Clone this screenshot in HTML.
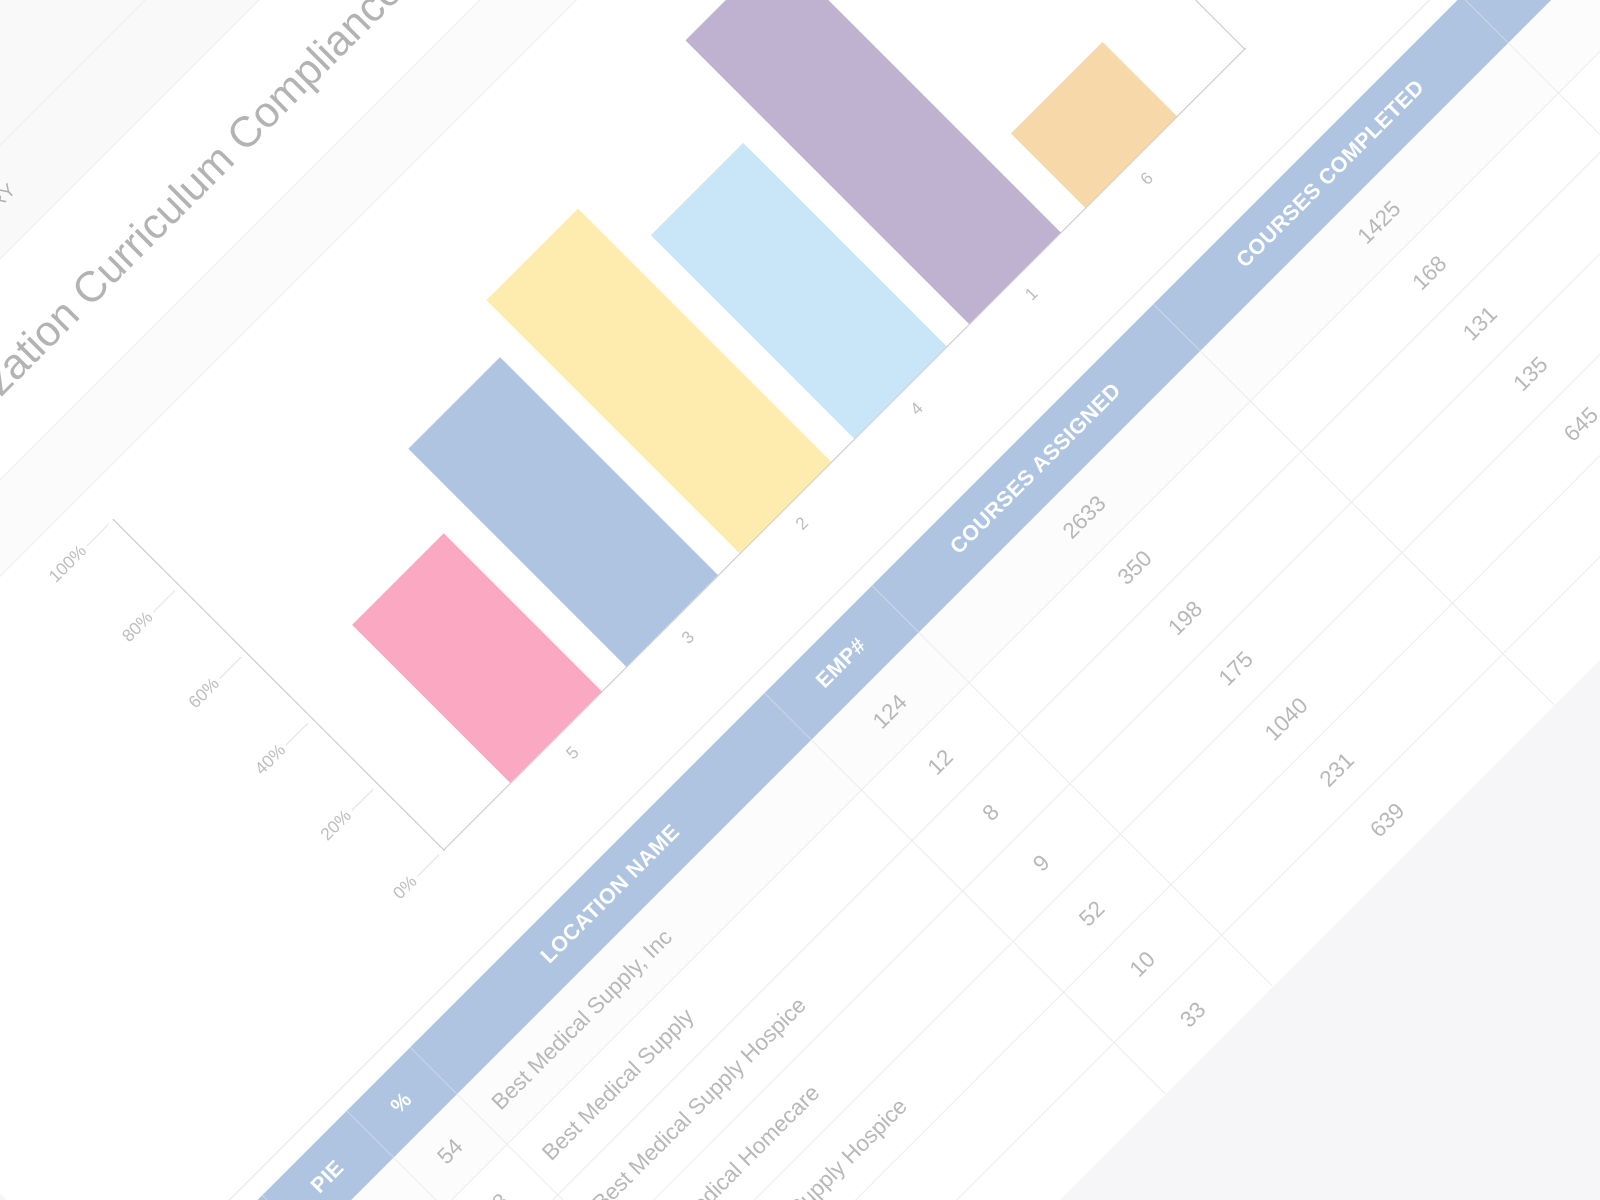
<!DOCTYPE html>
<html><head><meta charset="utf-8"><style>
html,body{margin:0;padding:0;width:1600px;height:1200px;overflow:hidden;background:#f6f6f8;font-family:"Liberation Sans",sans-serif}
#wrap{position:relative;width:1600px;height:1200px;overflow:hidden;background:#f6f6f8}
#r{position:absolute;left:0;top:0;width:0;height:0;transform-origin:0 0;transform:rotate(-45deg) scale(1.0204)}
#r div{position:absolute;box-sizing:border-box}
.lbl{color:#bdbdbd;font-size:17px;white-space:nowrap;line-height:20px}
.hd{color:#fff;font-size:21px;font-weight:bold;text-align:center;line-height:65px;white-space:nowrap;letter-spacing:0.5px}
.c{color:#b8b8b8;font-size:22px;line-height:70px;white-space:nowrap;height:70px}
.n{text-align:center}
</style></head><body>
<div id="wrap">
<div id="r">
  <div style="left:-900px;top:-200px;width:2400px;height:380px;background:#f9f9f9;border-bottom:1px solid #ededed"></div>
  <div style="left:-900px;top:100px;width:2400px;height:1px;background:#eeeeee"></div>
  <div style="left:-827px;top:180px;width:2300px;height:1386px;background:#fff"></div>
  <div style="left:-827px;top:332px;width:2300px;height:68px;background:#fbfbfb;border-top:1px solid #efefef;border-bottom:1px solid #efefef"></div>
  <div class="lbl" style="left:-300px;top:128px;width:180px;text-align:right;font-size:18px;color:#b0b0b0;letter-spacing:1px">SUMMARY</div>
  <div style="left:-700px;top:237px;width:985px;text-align:right;font-size:42px;color:#b3b3b3;line-height:50px;white-space:nowrap">Organization Curriculum Compliance</div>

  <div style="left:-282px;top:438px;width:1px;height:460px;background:#c6c6c6"></div>
  <div style="left:-282px;top:896px;width:1112px;height:1px;background:#c6c6c6"></div>
  <div style="left:828px;top:380px;width:1px;height:517px;background:#c6c6c6"></div>
  <div style="left:-318px;top:438px;width:30px;height:1px;background:#e2e2e2"></div>
  <div style="left:-318px;top:530px;width:30px;height:1px;background:#e2e2e2"></div>
  <div style="left:-318px;top:622px;width:30px;height:1px;background:#e2e2e2"></div>
  <div style="left:-318px;top:714px;width:30px;height:1px;background:#e2e2e2"></div>
  <div style="left:-318px;top:805px;width:30px;height:1px;background:#e2e2e2"></div>
  <div style="left:-318px;top:896px;width:30px;height:1px;background:#e2e2e2"></div>
  <div class="lbl" style="left:-400px;top:428px;width:78px;text-align:right">100%</div>
  <div class="lbl" style="left:-400px;top:520px;width:78px;text-align:right">80%</div>
  <div class="lbl" style="left:-400px;top:612px;width:78px;text-align:right">60%</div>
  <div class="lbl" style="left:-400px;top:704px;width:78px;text-align:right">40%</div>
  <div class="lbl" style="left:-400px;top:795px;width:78px;text-align:right">20%</div>
  <div class="lbl" style="left:-400px;top:886px;width:78px;text-align:right">0%</div>

  <div style="left:-189px;top:677px;width:127px;height:219px;background:#fba8c2"></div>
  <div style="left:-28px;top:594px;width:127px;height:302px;background:#aec4e1"></div>
  <div style="left:129px;top:545px;width:127px;height:351px;background:#fdecad"></div>
  <div style="left:288px;top:614px;width:128px;height:282px;background:#c9e6f8"></div>
  <div style="left:447px;top:503px;width:127px;height:393px;background:#bfb2d0"></div>
  <div style="left:608px;top:793px;width:127px;height:103px;background:#f7d8a8"></div>
  <div class="lbl" style="left:-175px;top:909px;width:100px;text-align:center">5</div>
  <div class="lbl" style="left:-15px;top:909px;width:100px;text-align:center">3</div>
  <div class="lbl" style="left:143px;top:909px;width:100px;text-align:center">2</div>
  <div class="lbl" style="left:302px;top:909px;width:100px;text-align:center">4</div>
  <div class="lbl" style="left:461px;top:909px;width:100px;text-align:center">1</div>
  <div class="lbl" style="left:621px;top:909px;width:100px;text-align:center">6</div>

  <div style="left:-827px;top:990px;width:2300px;height:1px;background:#e6e6e6"></div>
  <div style="left:-827px;top:1010px;width:2300px;height:65px;background:#aec4e1"></div>
  <div style="left:-647px;top:1010px;width:1px;height:65px;background:#cbd8ea"></div>
  <div style="left:-530px;top:1010px;width:1px;height:65px;background:#cbd8ea"></div>
  <div style="left:-442px;top:1010px;width:1px;height:65px;background:#cbd8ea"></div>
  <div style="left:49px;top:1010px;width:1px;height:65px;background:#cbd8ea"></div>
  <div style="left:198px;top:1010px;width:1px;height:65px;background:#cbd8ea"></div>
  <div style="left:588px;top:1010px;width:1px;height:65px;background:#cbd8ea"></div>
  <div style="left:1015px;top:1010px;width:1px;height:65px;background:#cbd8ea"></div>
  <div class="hd" style="left:-647px;top:1010px;width:117px">PIE</div>
  <div class="hd" style="left:-530px;top:1010px;width:88px">%</div>
  <div class="hd" style="left:-442px;top:1010px;width:491px">LOCATION NAME</div>
  <div class="hd" style="left:49px;top:1010px;width:149px">EMP#</div>
  <div class="hd" style="left:198px;top:1010px;width:390px">COURSES ASSIGNED</div>
  <div class="hd" style="left:588px;top:1010px;width:427px">COURSES COMPLETED</div>

  <div style="left:-827px;top:1075px;width:2300px;height:70px;background:#fcfcfc"></div>
  <div style="left:-827px;top:1144px;width:2300px;height:1px;background:#ececec"></div>
  <div style="left:-827px;top:1214px;width:2300px;height:1px;background:#ececec"></div>
  <div style="left:-827px;top:1284px;width:2300px;height:1px;background:#ececec"></div>
  <div style="left:-827px;top:1354px;width:2300px;height:1px;background:#ececec"></div>
  <div style="left:-827px;top:1424px;width:2300px;height:1px;background:#ececec"></div>
  <div style="left:-827px;top:1494px;width:2300px;height:1px;background:#ececec"></div>
  <div style="left:-647px;top:1075px;width:1px;height:490px;background:#ececec"></div>
  <div style="left:-530px;top:1075px;width:1px;height:490px;background:#ececec"></div>
  <div style="left:-442px;top:1075px;width:1px;height:490px;background:#ececec"></div>
  <div style="left:49px;top:1075px;width:1px;height:490px;background:#ececec"></div>
  <div style="left:198px;top:1075px;width:1px;height:490px;background:#ececec"></div>
  <div style="left:588px;top:1075px;width:1px;height:490px;background:#ececec"></div>
  <div style="left:1015px;top:1075px;width:1px;height:490px;background:#ececec"></div>

  <div class="c n" style="left:-530px;top:1075px;width:88px">54</div>
  <div class="c n" style="left:-530px;top:1145px;width:88px">8</div>
  <div class="c n" style="left:-530px;top:1215px;width:88px">5</div>
  <div class="c n" style="left:-530px;top:1285px;width:88px">6</div>

  <div class="c" style="left:-423px;top:1075px;width:460px">Best Medical Supply, Inc</div>
  <div class="c" style="left:-423px;top:1145px;width:460px">Best Medical Supply</div>
  <div class="c" style="left:-423px;top:1215px;width:460px">Best Medical Supply Hospice</div>
  <div class="c" style="left:-423px;top:1285px;width:460px">Best Medical Homecare</div>
  <div class="c" style="left:-423px;top:1355px;width:460px">Best Medical Supply Hospice</div>
  <div class="c" style="left:-423px;top:1425px;width:460px">Best Medical Surgery</div>

  <div class="c n" style="left:49px;top:1075px;width:149px">124</div>
  <div class="c n" style="left:49px;top:1145px;width:149px">12</div>
  <div class="c n" style="left:49px;top:1215px;width:149px">8</div>
  <div class="c n" style="left:49px;top:1285px;width:149px">9</div>
  <div class="c n" style="left:49px;top:1355px;width:149px">52</div>
  <div class="c n" style="left:49px;top:1425px;width:149px">10</div>
  <div class="c n" style="left:49px;top:1495px;width:149px">33</div>

  <div class="c n" style="left:198px;top:1075px;width:390px">2633</div>
  <div class="c n" style="left:198px;top:1145px;width:390px">350</div>
  <div class="c n" style="left:198px;top:1215px;width:390px">198</div>
  <div class="c n" style="left:198px;top:1285px;width:390px">175</div>
  <div class="c n" style="left:198px;top:1355px;width:390px">1040</div>
  <div class="c n" style="left:198px;top:1425px;width:390px">231</div>
  <div class="c n" style="left:198px;top:1495px;width:390px">639</div>

  <div class="c n" style="left:588px;top:1075px;width:427px">1425</div>
  <div class="c n" style="left:588px;top:1145px;width:427px">168</div>
  <div class="c n" style="left:588px;top:1215px;width:427px">131</div>
  <div class="c n" style="left:588px;top:1285px;width:427px">135</div>
  <div class="c n" style="left:588px;top:1355px;width:427px">645</div>
  <div class="c n" style="left:588px;top:1425px;width:427px">120</div>
  <div class="c n" style="left:588px;top:1495px;width:427px">402</div>

  <div style="left:-900px;top:1566px;width:2500px;height:800px;background:#f6f6f8"></div>
</div>
</div>
</body></html>
